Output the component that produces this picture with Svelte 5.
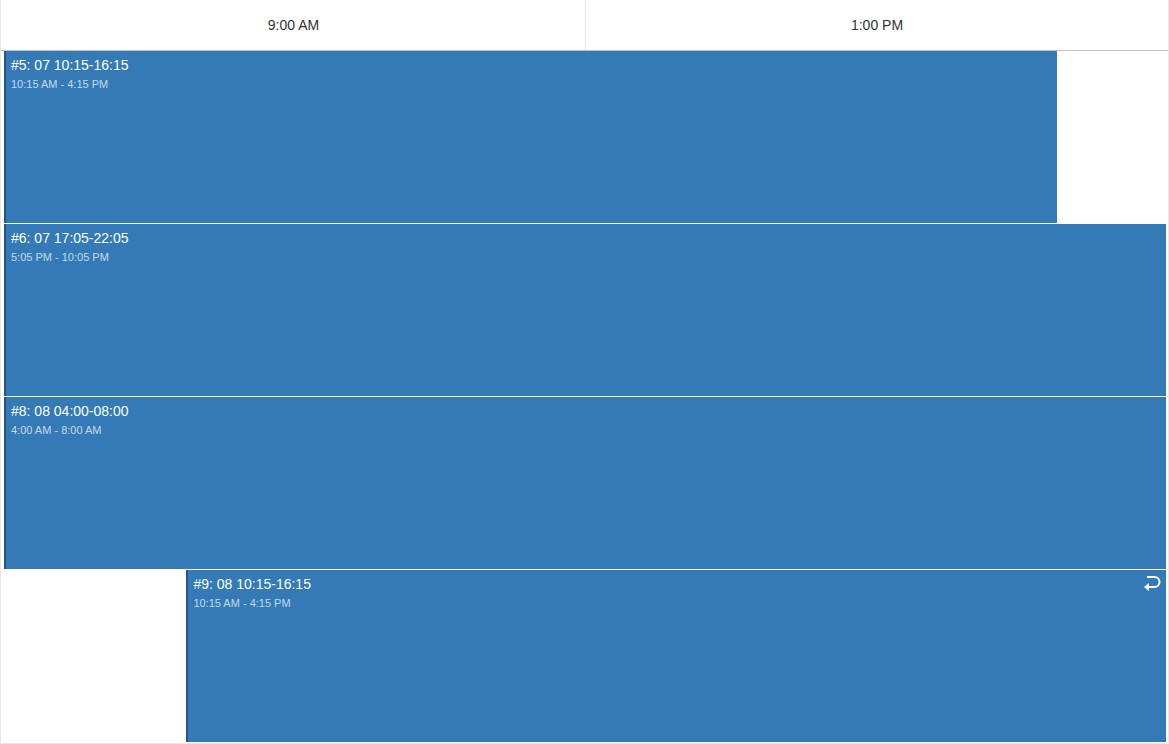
<script>
  const slots = ['9:00 AM', '1:00 PM'];
  const events = [
    { title: '#5: 07 10:15-16:15', time: '10:15 AM - 4:15 PM', start: 3, width: 1053 },
    { title: '#6: 07 17:05-22:05', time: '5:05 PM - 10:05 PM', start: 3, width: 1162 },
    { title: '#8: 08 04:00-08:00', time: '4:00 AM - 8:00 AM', start: 3, width: 1162 },
    { title: '#9: 08 10:15-16:15', time: '10:15 AM - 4:15 PM', start: 185.4, width: 979.6, recurring: true }
  ];
</script>

<div class="timeline">
  <header>
    {#each slots as slot}
      <div class="slot">{slot}</div>
    {/each}
  </header>
  <div class="rows">
    {#each events as event}
      <article class="event" style="margin-left: {event.start}px; width: {event.width}px">
        <div class="details">
          <div class="title">{event.title}</div>
          <div class="time">{event.time}</div>
        </div>
        {#if event.recurring}
          <svg class="recurring" width="18" height="18" viewBox="0 0 18 18" aria-hidden="true">
            <path d="M4 2H11.5A4.5 4.5 0 0 1 11.5 12H5" fill="none" stroke="#fff" stroke-width="2" />
            <path d="M1 12L6 8V16Z" fill="#fff" />
          </svg>
        {/if}
      </article>
    {/each}
  </div>
</div>

<style>
  :global(body) {
    margin: 0;
    background: #fff;
  }
  .timeline {
    box-sizing: border-box;
    width: 1169px;
    height: 744px;
    border: 1px solid #e8e8e8;
    border-top: 0;
    font-family: 'Liberation Sans', Arial, sans-serif;
    overflow: hidden;
  }
  header {
    box-sizing: border-box;
    display: grid;
    grid-template-columns: 585px 1fr;
    height: 51px;
    border-bottom: 1px solid #c1c1c1;
  }
  .slot {
    display: flex;
    align-items: center;
    justify-content: center;
    color: #333;
    font-size: 14px;
    line-height: 20px;
  }
  .slot:first-child {
    padding-left: 1px;
    border-right: 1px solid #e8e8e8;
  }
  .rows {
    display: flex;
    flex-direction: column;
    gap: 1px;
  }
  .event {
    box-sizing: border-box;
    display: flex;
    justify-content: space-between;
    height: 172px;
    padding: 4px 5px;
    border-left: 2px solid #245785;
    background: #337ab7;
    color: #fff;
  }
  .title {
    font-size: 14px;
    line-height: 20px;
  }
  .time {
    font-size: 11px;
    line-height: 18px;
    opacity: 0.7;
  }
  .recurring {
    flex: none;
    margin-top: 1px;
  }
</style>
